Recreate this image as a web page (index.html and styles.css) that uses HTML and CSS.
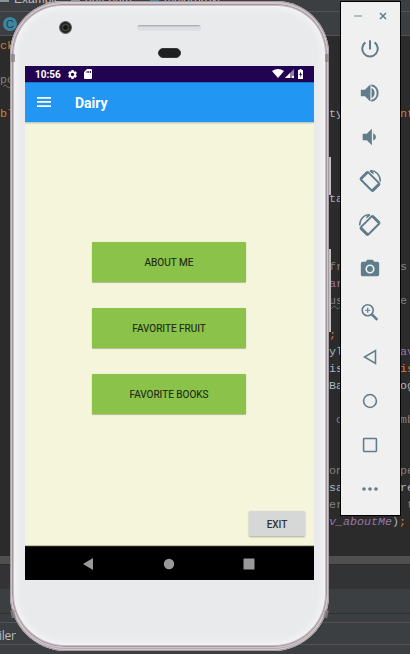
FILE: index.html
```html
<!DOCTYPE html>
<html lang="en">
<head>
<meta charset="utf-8">
<title>Dairy</title>
<link rel="stylesheet" href="styles.css">
</head>
<body>
<main class="desktop">
  <section class="ide">
    <div class="crumbs"><i class="folder"></i><span class="crumb">Example</span><i class="folder"></i><span class="crumb">datebum</span><i class="folder"></i><span class="crumb">majorproxi</span></div>
    <div class="tabs"><span class="class-icon">C</span></div>
    <div class="code">
      <div class="line"><span class="kw">ck</span></div>
      <div class="line"></div>
      <div class="line"><span class="dim wavy">po</span></div>
      <div class="line"></div>
      <div class="line"><span class="kw">bl</span><span>ty</span><span class="kw">nt</span></div>
      <div class="line"></div><div class="line"></div><div class="line"></div><div class="line"></div>
      <div class="line"><span></span><span>ta</span></div>
      <div class="line"></div><div class="line"></div><div class="line"></div>
      <div class="line"><span></span><span class="dim">fr</span><span class="dim">s</span></div>
      <div class="line"><span></span><span class="field upright">ar</span></div>
      <div class="line"><span></span><span class="dim typo">us</span><span class="dim">e</span></div>
      <div class="line"></div>
      <div class="line"><span></span><span class="kw">;</span></div>
      <div class="line"><span></span><span>yl</span><span class="field upright">av</span></div>
      <div class="line"><span></span><span>is</span><span class="kw">is</span></div>
      <div class="line"><span></span><span>Ba</span><span>og</span></div>
      <div class="line"></div>
      <div class="line"><span></span><span class="dim"> c</span><span class="dim">mb</span></div>
      <div class="line"></div><div class="line"></div>
      <div class="line"><span></span><span class="dim">on</span><span class="dim">pe</span></div>
      <div class="line"><span></span><span>sa</span><span>re</span></div>
      <div class="line"><span></span><span class="dim">er</span><span class="dim"> t</span></div>
      <div class="line"><span></span><span><em class="field">v_aboutMe</em>)<b>;</b></span></div>
    </div>
    <div class="scrollbar"></div>
    <div class="gutter"></div>
    <div class="panel"></div>
    <div class="strip"></div>
    <div class="tools">iler</div>
    <div class="status-line"></div>
  </section>

  <section class="phone">
    <i class="side-key power-key"></i><i class="side-key volume-key"></i>
    <i class="band band-l-top"></i><i class="band band-r-top"></i><i class="band band-l-bottom"></i><i class="band band-r-bottom"></i>
    <div class="face">
      <div class="forehead">
        <i class="camera"></i><i class="speaker"></i><i class="sensor"></i>
      </div>
      <div class="screen">
        <div class="statusbar">
          <span>10:56</span>
          <svg class="gear" width="11" height="11" viewBox="0 0 24 24"><path fill="#fff" d="M19.4 13c.04-.3.06-.6.06-1s-.02-.7-.07-1l2.1-1.6a.5.5 0 0 0 .1-.7l-2-3.4a.5.5 0 0 0-.6-.2l-2.4 1a7 7 0 0 0-1.7-1l-.3-2.600a.5.5 0 0 0-.5-.4h-4a.5.5 0 0 0-.5.4l-.3 2.600a7 7 0 0 0-1.700 1l-2.400-1a.5.5 0 0 0-.6.2l-2 3.400a.5.5 0 0 0 .1.700L4.700 11a7 7 0 0 0 0 2l-2.100 1.600a.5.5 0 0 0-.1.700l2 3.400c.1.200.4.300.6.200l2.400-1a7 7 0 0 0 1.700 1l.3 2.600c0 .2.200.4.500.4h4c.3 0 .5-.2.500-.4l.3-2.600a7 7 0 0 0 1.700-1l2.400 1c.2.100.5 0 .6-.2l2-3.400a.5.5 0 0 0-.1-.700zM12 15.600a3.600 3.600 0 1 1 0-7.200 3.600 3.600 0 0 1 0 7.200z"/></svg>
          <svg class="sd" width="8" height="10" viewBox="0 0 8 10"><path fill="#fff" fill-rule="evenodd" d="M3 0h4q1 0 1 1v8q0 1-1 1H1q-1 0-1-1V3zM2.600 2v2h.9V2zm1.700 0v2h.9V2zM6 2v2h.9V2z"/></svg>
          <svg class="signals" width="35" height="10" viewBox="0 0 35 10"><path fill="#fff" d="M0 2Q6-2 12 2L6 9z"/><path fill="#8f80a8" d="M22 0v9h-9z"/><path fill="#fff" d="M18 4v5h-5zM20 7h2v2h-2z"/><path fill="#fff" fill-rule="evenodd" d="M26 1h1.500V0h2v1H31v9h-5zM29 2.500 27.200 6h1.200v2.600L30 5h-1z"/></svg>
        </div>
        <header class="appbar">
          <svg width="14" height="10" viewBox="0 0 14 10"><path fill="#fff" d="M0 0h14v1.700H0zM0 4.100h14v1.700H0zM0 8.200h14v1.700H0z"/></svg>
          <h1>Dairy</h1>
        </header>
        <div class="content">
          <button class="main-btn">ABOUT ME</button>
          <button class="main-btn">FAVORITE FRUIT</button>
          <button class="main-btn">FAVORITE BOOKS</button>
          <button class="exit">EXIT</button>
        </div>
        <nav class="navbar">
          <svg width="12" height="12" viewBox="0 0 12 12"><path fill="#999" d="M0 6 10 0v12z"/></svg>
          <svg width="12" height="12" viewBox="0 0 12 12"><circle cx="6" cy="6" r="5.200" fill="#999"/></svg>
          <svg width="12" height="12" viewBox="0 0 12 12"><rect x=".5" y=".5" width="11" height="11" rx=".5" fill="#999"/></svg>
        </nav>
      </div>
    </div>
  </section>

  <aside class="toolbar">
    <div class="window-keys">
      <svg width="8" height="8" viewBox="0 0 8 8"><path stroke="#9bafb9" stroke-width="1.500" d="M0 4h8"/></svg>
      <svg width="8" height="8" viewBox="0 0 8 8"><path stroke="#607d8b" stroke-width="1.500" d="m1 1 6 6m0-6L1 7"/></svg>
    </div>
    <div class="tool"><svg viewBox="0 0 24 24"><path class="s" d="M12 2.500v10M7 4.800a8.500 8.500 0 1 0 10 0"/></svg></div>
    <div class="tool"><svg viewBox="0 0 24 24"><path d="M2 8.500v7h4.500L12.500 21.500V2.500L6.500 8.500zM13.700 6.500v11q3.300-1.500 3.300-5.500t-3.300-5.500z"/><path class="s" d="M13.500 3.500a8.700 8.700 0 0 1 0 17"/></svg></div>
    <div class="tool"><svg viewBox="0 0 24 24"><path d="M4 8.500v7h4.500L14 21V3L8.500 8.500zM15.500 8v8q3-1.200 3-4t-3-4z"/></svg></div>
    <div class="tool"><svg viewBox="0 0 24 24"><g id="rotate"><g transform="rotate(45 12 12.500)"><rect class="s" x="2.500" y="6.800" width="19" height="11.400" rx="1.200"/><path d="M1.500 7.500h3v10h-3zM19.500 7.500h3v10h-3z"/></g><path class="s arc" d="M12 1c6-1 11 4 11.300 11.500M12 1l4 3"/></g></svg></div>
    <div class="tool"><svg viewBox="0 0 24 24"><use href="#rotate" transform="translate(24) scale(-1 1)"/></svg></div>
    <div class="tool"><svg viewBox="0 0 24 24"><path fill-rule="evenodd" d="M9 2 7.200 4H4a2 2 0 0 0-2 2v12c0 1.100.9 2 2 2h16a2 2 0 0 0 2-2V6a2 2 0 0 0-2-2h-3.200L15 2zM12 17a5 5 0 1 1 0-10 5 5 0 0 1 0 10z"/><circle cx="12" cy="12" r="3.200"/></svg></div>
    <div class="tool"><svg viewBox="0 0 24 24"><circle class="s mid" cx="9.500" cy="9" r="6"/><path class="s thin" d="M9.500 6.300v5.400M6.800 9h5.400"/><path class="s thick" d="m14 13.500 6 6"/></svg></div>
    <div class="tool"><svg viewBox="0 0 24 24"><path class="s mid" d="M18 5v14L6 12z"/></svg></div>
    <div class="tool"><svg viewBox="0 0 24 24"><circle class="s mid" cx="12" cy="12" r="7"/></svg></div>
    <div class="tool"><svg viewBox="0 0 24 24"><rect class="s mid" x="5" y="5" width="14" height="14" rx=".6"/></svg></div>
    <div class="tool"><svg viewBox="0 0 24 24"><circle cx="5.500" cy="12" r="2"/><circle cx="12" cy="12" r="2"/><circle cx="18.500" cy="12" r="2"/></svg></div>
  </aside>
</main>
</body>
</html>
```

FILE: styles.css
```css
* { box-sizing: border-box; }
body { margin: 0; background: #2b2b2b; overflow: hidden; }
svg { display: block; flex: none; }

.desktop { position: relative; width: 410px; height: 654px; overflow: hidden; }

/* Code editor window */
.ide { display: flex; flex-direction: column; height: 654px; }
.crumbs {
  display: flex; flex: none; height: 12px; overflow: hidden;
  background: #3c3f41; border-bottom: 1px solid #515456;
  font: 12px/14px "Liberation Sans", sans-serif; color: #bbb;
}
.crumbs span { margin-top: -8px; }
.crumb { width: 57px; margin-left: 5px; }
.folder { width: 9px; height: 2px; background: #87939a; flex: none; }
.folder:nth-of-type(3) { margin-left: 8px; background: #4385a0; }
.tabs { flex: none; height: 24px; background: #3c3f41; border-bottom: 1px solid #515151; padding: 5px 0 0 3px; }
.class-icon {
  display: block; width: 14px; height: 14px; border-radius: 50%;
  background: #3e86a0; color: #203f4c; font: 11px/14px "Liberation Sans", sans-serif; text-align: center;
}
.code {
  flex: none; height: 520px; padding-top: 2px; overflow: hidden; background: #2b2b2b; color: #a9b7c6;
  font: 11.67px/17px "Liberation Mono", monospace;
}
.line { display: grid; grid-template-columns: 329px 71px 1fr; height: 17px; white-space: pre; }
.kw, .line b { color: #d87c30; font-weight: normal; }
.dim { color: #808080; }
.wavy { text-decoration: underline wavy #777 1px; }
.typo { text-decoration: underline wavy #4d7a50 1px; }
.field { color: #9876aa; }
.upright { font-style: normal; }
.scrollbar { flex: none; height: 8px; background: #4f4f4f; }
.gutter { flex: none; height: 25px; background: #323335; border-top: 1px solid #2b2b2b; }
.panel { flex: none; height: 24px; background: #3c3f41; }
.strip { flex: none; height: 9px; background: #3c3f41; border-top: 1px solid #2f3133; }
.tools {
  flex: none; height: 22px; background: #3c3f41; border-top: 1px solid #55504f;
  font: 12px/25px "Open Sans", sans-serif; color: #bbb; letter-spacing: -.3px; text-indent: -1px;
}
.status-line { flex: 1; background: #3c3f41; border-top: 1px solid #515456; }

/* Emulated handset */
.phone {
  position: absolute; left: 10px; top: 1px; width: 319px; height: 650px; padding: 2px 1px 3px;
  border-radius: 53px 53px 56px 56px; background: #b5a8ad;
  box-shadow: inset 0 0 0 1px #a69ca0, inset 0 0 0 2px #d5c9ce;
}
.face {
  position: relative; height: 645px; padding: 0 10px; border: 1px solid #d0c5ca; border-radius: 51px 51px 54px 54px;
  background: #e9eaec;
  box-shadow: inset 0 0 0 1px #9f979b, inset 0 0 0 2px #c7bfc3, inset 0 0 7px 4px #f6f6f9;
}
.forehead { position: relative; height: 62px; }
.camera, .speaker, .sensor { position: absolute; }
.camera {
  left: 37px; top: 17px; width: 13px; height: 13px; border-radius: 50%;
  background: radial-gradient(circle, #141510 0 22%, #42433d 26% 38%, #252627 42% 55%, #55575a 60%);
}
.speaker {
  left: 115px; top: 21px; width: 64px; height: 6px; border-radius: 3px;
  background: linear-gradient(#999fa6, #dadce0 35%, #dfe1e4);
}
.sensor { left: 136px; top: 44px; width: 23px; height: 10px; border-radius: 5px; background: #1d1f21; border: 1px solid #35373a; }
.side-key { position: absolute; right: -2px; width: 2px; background: #c2bfc0; }
.power-key { top: 156px; height: 38px; }
.volume-key { top: 248px; height: 83px; }
.band { position: absolute; z-index: 1; width: 4px; height: 8px; background: #8b8186; opacity: .75; }
.band-l-top { left: 1px; top: 53px; }
.band-r-top { right: 0; top: 53px; }
.band-l-bottom { left: 1px; bottom: 33px; transform: rotate(-12deg); }
.band-r-bottom { right: 1px; bottom: 33px; transform: rotate(12deg); }

/* Android app */
.screen { width: 289px; height: 514px; margin-left: 3px; font-family: Roboto, sans-serif; }
.statusbar { display: flex; align-items: center; height: 16px; padding: 0 10px; background: #210352; color: #fff; font-size: 10px; font-weight: 700; }
.gear { margin-left: 6px; }
.sd { margin-left: 6px; }
.signals { margin-left: auto; margin-right: -3px; }
.appbar { display: flex; align-items: center; height: 40px; padding: 0 12px; background: #2196f3; border-top: 1px solid #1976c3; }
.appbar svg { margin-top: -2px; }
.appbar h1 { margin: 1px 0 0 24px; color: #fff; font-size: 14px; line-height: 18px; font-weight: 700; }
.content {
  display: flex; flex-direction: column; align-items: center; gap: 26px; height: 424px; padding: 120px 0 10px;
  background: #f5f5dc; box-shadow: inset 0 1px #b9cdd0, inset 0 2px 1px #dddfc7, inset 0 -1px #c0c2a5;
}
button { padding: 0; border: 0; border-radius: 1px; font-family: Roboto, sans-serif; font-size: 10px; font-weight: 500; color: #222b15; }
.main-btn { flex: none; width: 154px; height: 40px; margin-right: 1px; padding-top: 1px; background: #8bc34a; box-shadow: 0 1px 1px rgba(90,100,40,.4), 0 0 1px rgba(90,100,40,.3); font-weight: 400; -webkit-text-stroke: .15px #222b15; }
.exit { width: 56px; height: 25px; margin: auto 9px 0 auto; padding-top: 1px; background: #d6d7d7; color: #333; box-shadow: 0 1px 2px rgba(0,0,0,.3); }
.navbar { display: flex; align-items: center; justify-content: center; gap: 68px; height: 34px; padding-right: 2px; background: #000; border-top: 1px solid #202018; }

/* Emulator controls */
.toolbar {
  position: absolute; left: 340px; top: 1px; width: 61px; height: 515px; border: 1px solid #000;
  background: #f0f0f0;
}
.window-keys { display: flex; justify-content: space-between; height: 25px; padding: 10px 13px 0; }
.tool { display: grid; place-items: center; height: 44px; padding-right: 1px; }
.tool svg { width: 22px; height: 22px; fill: #607d8b; overflow: visible; }
.tool .s { fill: none; stroke: #607d8b; stroke-width: 2.200; }
.tool .thin { stroke-width: 1.300; }
.tool .arc { stroke-width: 1.600; }
.tool .mid { stroke-width: 1.700; }
.tool .thick { stroke-width: 2.800; }
```
